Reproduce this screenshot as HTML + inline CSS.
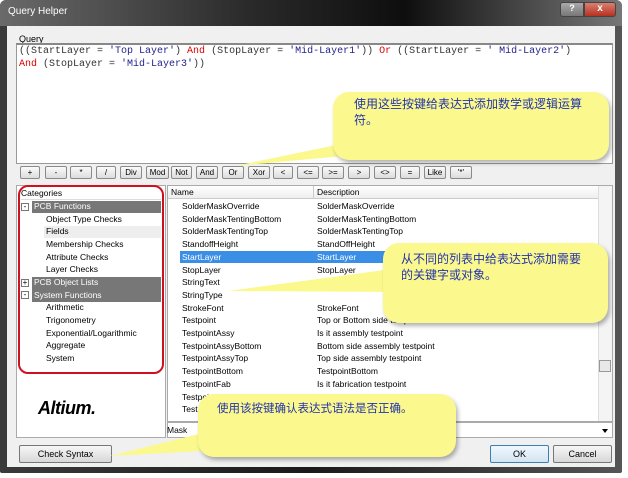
<!DOCTYPE html>
<html><head><meta charset="utf-8"><style>
*{margin:0;padding:0;box-sizing:border-box}
body{width:628px;height:478px;background:#fff;position:relative;overflow:hidden;font-family:"Liberation Sans","Noto Sans CJK SC",sans-serif;font-size:10px;color:#000}
.abs{position:absolute}
.frame{left:0;top:0;width:622px;height:473px;background:linear-gradient(90deg,#3a3a3a,#1a1a1a 50%,#555);border-radius:6px 6px 2px 2px}
.title{left:0;top:0;width:622px;height:26px;background:linear-gradient(90deg,#6a6a6a,#2a2a2a 40%,#0e0e0e 65%,#777);border-radius:6px 6px 0 0}
.client{left:7px;top:26px;width:608px;height:441px;background:#f0f0f0}
.btn{position:absolute;top:166px;height:13px;border:1px solid #8a8a8a;border-radius:2px;background:linear-gradient(#fafafa,#dcdcdc);font-size:8px;text-align:center;line-height:11px}
.row{position:absolute;height:13px;line-height:13px;font-size:8.5px;white-space:nowrap}
.bub{position:absolute;background:#fbf98e;border-radius:16px;box-shadow:2px 3px 4px rgba(0,0,0,.3);font-size:12px;color:#2233aa}
</style></head><body>
<div class="abs frame"></div>
<div class="abs title"></div>
<div class="abs" style="left:8px;top:6px;color:#fff;font-size:10px">Query Helper</div>
<div class="abs" style="left:560px;top:2px;width:24px;height:15px;background:linear-gradient(#aaa,#777);border:1px solid #444;border-radius:3px 0 0 3px;color:#fff;font-size:9px;text-align:center;font-weight:bold">?</div>
<div class="abs" style="left:584px;top:2px;width:32px;height:15px;background:linear-gradient(#d88070,#b83020);border:1px solid #444;border-radius:0 3px 3px 0;color:#fff;font-size:10px;text-align:center;font-weight:bold">x</div>
<div class="abs client"></div>
<div class="abs" style="left:19px;top:34px;font-size:9px">Query</div>
<div class="abs" style="left:16px;top:43px;width:597px;height:121px;background:#fff;border:1px solid #999;border-top:2px solid #888"></div>
<div class="abs" style="left:19px;top:45px;font-size:10px;line-height:13px;font-family:'Liberation Mono',monospace;color:#333;white-space:pre">((StartLayer = <span style="color:#23238e">'Top Layer'</span>) <span style="color:#d00">And</span> (StopLayer = <span style="color:#23238e">'Mid-Layer1'</span>)) <span style="color:#d00">Or</span> ((StartLayer = <span style="color:#23238e">' Mid-Layer2'</span>)
<span style="color:#d00">And</span> (StopLayer = <span style="color:#23238e">'Mid-Layer3'</span>))</div>

<div class="btn" style="left:20px;width:20px">+</div>
<div class="btn" style="left:45px;width:22px">-</div>
<div class="btn" style="left:70px;width:22px">*</div>
<div class="btn" style="left:96px;width:20px">/</div>
<div class="btn" style="left:120px;width:22px">Div</div>
<div class="btn" style="left:146px;width:23px">Mod</div>
<div class="btn" style="left:171px;width:21px">Not</div>
<div class="btn" style="left:196px;width:22px">And</div>
<div class="btn" style="left:222px;width:22px">Or</div>
<div class="btn" style="left:248px;width:22px">Xor</div>
<div class="btn" style="left:273px;width:20px">&lt;</div>
<div class="btn" style="left:297px;width:22px">&lt;=</div>
<div class="btn" style="left:322px;width:22px">&gt;=</div>
<div class="btn" style="left:348px;width:22px">&gt;</div>
<div class="btn" style="left:374px;width:22px">&lt;&gt;</div>
<div class="btn" style="left:400px;width:20px">=</div>
<div class="btn" style="left:424px;width:22px">Like</div>
<div class="btn" style="left:450px;width:22px">'*'</div>

<div class="abs" style="left:16px;top:185px;width:150px;height:253px;background:#fff;border:1px solid #aaa"></div>
<div class="row" style="left:21px;top:187px;width:140px;border-bottom:1px solid #ddd">Categories</div>
<div class="abs" style="left:32px;top:201px;width:129px;height:12px;background:#777"></div>
<div class="abs" style="left:32px;top:277px;width:129px;height:25px;background:#777"></div>
<div class="abs" style="left:44px;top:226px;width:117px;height:12px;background:#eee"></div>
<div class="row" style="left:34px;top:200px;color:#fff">PCB Functions</div>
<div class="row" style="left:46px;top:213px">Object Type Checks</div>
<div class="row" style="left:46px;top:225px">Fields</div>
<div class="row" style="left:46px;top:238px">Membership Checks</div>
<div class="row" style="left:46px;top:251px">Attribute Checks</div>
<div class="row" style="left:46px;top:263px">Layer Checks</div>
<div class="row" style="left:34px;top:276px;color:#fff">PCB Object Lists</div>
<div class="row" style="left:34px;top:289px;color:#fff">System Functions</div>
<div class="row" style="left:46px;top:301px">Arithmetic</div>
<div class="row" style="left:46px;top:314px">Trigonometry</div>
<div class="row" style="left:46px;top:327px">Exponential/Logarithmic</div>
<div class="row" style="left:46px;top:339px">Aggregate</div>
<div class="row" style="left:46px;top:352px">System</div>
<div class="abs" style="left:21px;top:203px;width:8px;height:8px;border:1px solid #777;background:#fff;font-size:8px;line-height:6px;text-align:center">-</div>
<div class="abs" style="left:21px;top:279px;width:8px;height:8px;border:1px solid #777;background:#fff;font-size:8px;line-height:6px;text-align:center">+</div>
<div class="abs" style="left:21px;top:291px;width:8px;height:8px;border:1px solid #777;background:#fff;font-size:8px;line-height:6px;text-align:center">-</div>
<div class="abs" style="left:18px;top:185px;width:146px;height:189px;border:2px solid #d01020;border-radius:10px"></div>
<div class="abs" style="left:38px;top:398px;font-size:18px;font-weight:bold;font-style:italic;letter-spacing:-0.5px">Altium.</div>

<div class="abs" style="left:167px;top:185px;width:446px;height:237px;background:#fff;border:1px solid #aaa"></div>
<div class="abs" style="left:168px;top:186px;width:430px;height:13px;background:linear-gradient(#fff,#eee);border-bottom:1px solid #ccc"></div>
<div class="abs" style="left:313px;top:186px;width:1px;height:13px;background:#ccc"></div>
<div class="row" style="left:171px;top:186px">Name</div>
<div class="row" style="left:317px;top:186px">Description</div>
<div class="abs" style="left:598px;top:186px;width:14px;height:235px;background:#f4f4f4;border-left:1px solid #ddd"></div>
<div class="abs" style="left:599px;top:360px;width:12px;height:12px;background:#e8e8e8;border:1px solid #999"></div>
<div class="abs" style="left:180px;top:251px;width:210px;height:12px;background:#3a8ee6"></div>
<div class="abs" style="left:182px;top:200px;font-size:8.5px;line-height:12.7px;white-space:pre">SolderMaskOverride
SolderMaskTentingBottom
SolderMaskTentingTop
StandoffHeight
<span style="color:#fff">StartLayer</span>
StopLayer
StringText
StringType
StrokeFont
Testpoint
TestpointAssy
TestpointAssyBottom
TestpointAssyTop
TestpointBottom
TestpointFab
TestpointFabBottom
Test</div>
<div class="abs" style="left:317px;top:200px;font-size:8.5px;line-height:12.7px;white-space:pre">SolderMaskOverride
SolderMaskTentingBottom
SolderMaskTentingTop
StandOffHeight
<span style="color:#fff">StartLayer</span>
StopLayer
StringText

StrokeFont
Top or Bottom side testpoint
Is it assembly testpoint
Bottom side assembly testpoint
Top side assembly testpoint
TestpointBottom
Is it fabrication testpoint</div>
<div class="abs" style="left:167px;top:422px;width:446px;height:16px;background:#fff;border:1px solid #aaa"></div>
<div class="row" style="left:167px;top:424px">Mask</div>
<div class="abs" style="left:602px;top:429px;border:3px solid transparent;border-top:4px solid #000"></div>

<div class="abs" style="left:19px;top:445px;width:93px;height:18px;border:1px solid #777;border-radius:2px;background:linear-gradient(#f6f6f6,#d8d8d8);font-size:9px;text-align:center;line-height:16px">Check Syntax</div>
<div class="abs" style="left:490px;top:445px;width:59px;height:18px;border:1px solid #3c7fb1;border-radius:2px;background:linear-gradient(#f0f8ff,#d4e4f0);font-size:9px;text-align:center;line-height:16px">OK</div>
<div class="abs" style="left:553px;top:445px;width:59px;height:18px;border:1px solid #777;border-radius:2px;background:linear-gradient(#f6f6f6,#d8d8d8);font-size:9px;text-align:center;line-height:16px">Cancel</div>

<svg class="abs" style="left:0;top:0" width="628" height="478">
<polygon points="360,140 410,150 235,166" fill="#fbf98e"/>
<polygon points="400,268 400,292 228,291" fill="#fbf98e"/>
<polygon points="215,430 220,450 110,456" fill="#fbf98e"/>
</svg>
<div class="bub" style="left:333px;top:92px;width:276px;height:68px;padding:4px 18px 0 21px;line-height:16px">使用这些按键给表达式添加数学或逻辑运算符。</div>
<div class="bub" style="left:383px;top:243px;width:225px;height:80px;padding:8px 24px 0 18px;line-height:16px">从不同的列表中给表达式添加需要的关键字或对象。</div>
<div class="bub" style="left:198px;top:394px;width:258px;height:63px;padding:7px 10px 0 19px;line-height:16px;font-size:11.5px">使用该按键确认表达式语法是否正确。</div>
</body></html>
